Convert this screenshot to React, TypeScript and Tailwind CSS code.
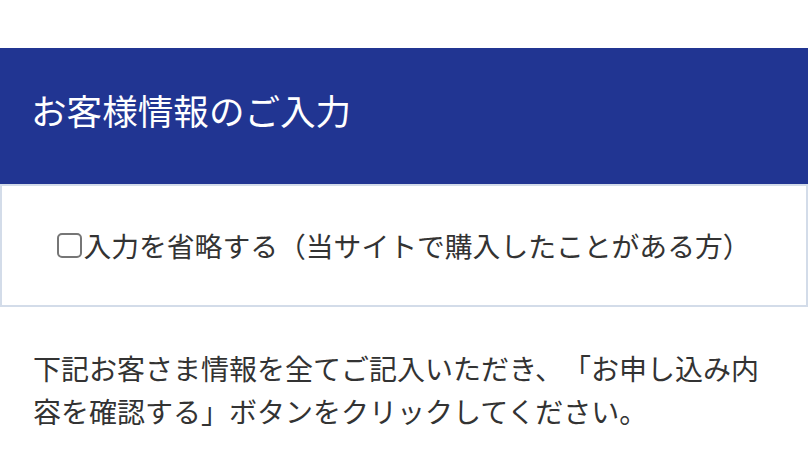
import React from 'react';

const jp = { fontFamily: '"Noto Sans CJK JP", "Noto Sans", sans-serif' };

export default function App() {
    return (
        <div className="w-[808px] h-[464px] bg-white overflow-hidden [text-spacing-trim:space-all]" style={jp}>
            <div className="h-[48px]" />

            {/* Section header */}
            <div className="h-[136px] bg-[#213592] flex items-center px-[31px] pb-[12px]">
                <h2 className="text-[35.6px] leading-none font-normal text-white">
                    お客様情報のご入力
                </h2>
            </div>

            {/* Skip input option */}
            <div className="h-[123px] border-2 border-[#d3dce9] flex items-center justify-center">
                <label className="flex items-center text-[27.8px] leading-none text-[#333333]">
                    <span className="w-[25px] h-[25px] border-2 border-[#767676] rounded-[5px] bg-white mr-[1px] shrink-0" />
                    入力を省略する（当サイトで購入したことがある方）
                </label>
            </div>

            {/* Instructions */}
            <p className="px-[33px] pt-[40px] text-[28px] leading-[43px] text-[#333333]">
                下記お客さま情報を全てご記入いただき、「お申し込み内容を確認する」ボタンをクリックしてください。
            </p>
        </div>
    );
}
